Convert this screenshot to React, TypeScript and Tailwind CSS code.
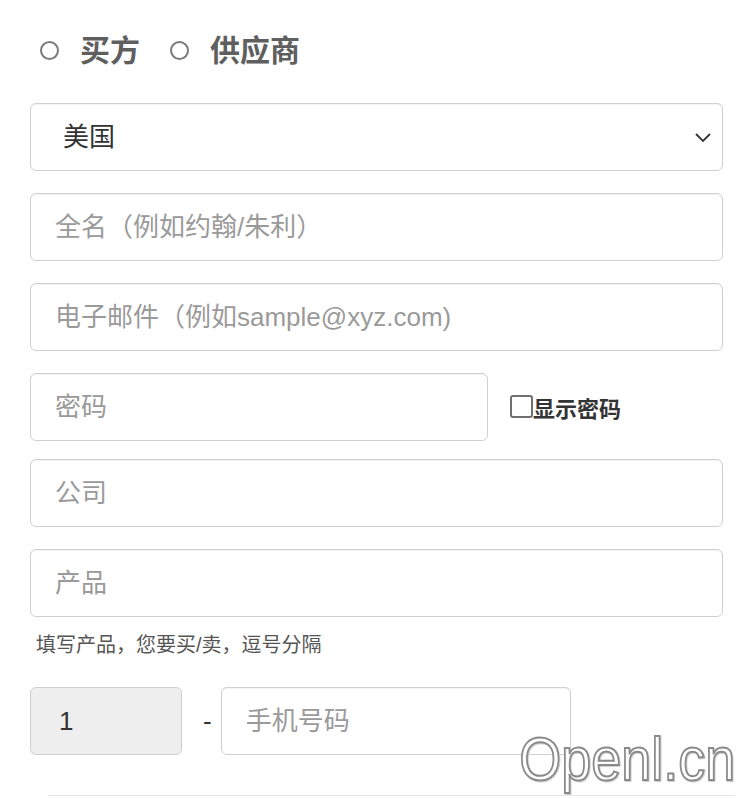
import React, { useState } from 'react';

const inputCls =
  'h-[68px] w-full rounded-[6px] border border-[#d0d0d0] bg-white px-6 text-[26px] text-[#333] placeholder:text-[#9a9a9a] outline-none shadow-[inset_0_1px_1px_rgba(0,0,0,0.05)]';

const App: React.FC = () => {
  const [role, setRole] = useState<'buyer' | 'supplier' | ''>('');
  const [showPwd, setShowPwd] = useState(false);

  return (
    <div className="min-h-[798px] w-[750px] overflow-hidden bg-white font-['Liberation_Sans','Noto_Sans_CJK_SC',sans-serif]">
      <div className="pl-[30px] pr-[27px] pt-[31px]">
        {/* role radios */}
        <div className="flex items-center h-[38px] pl-[10px] text-[30px] font-bold text-[#5f5f5f]">
          <label className="flex items-center cursor-pointer" onClick={() => setRole('buyer')}>
            <span className={`mr-[21px] h-[19px] w-[19px] rounded-full border-[2px] border-[#7a7a7a] ${role === 'buyer' ? 'bg-[#7a7a7a]' : ''}`} />
            买方
          </label>
          <label className="ml-[30px] flex items-center cursor-pointer" onClick={() => setRole('supplier')}>
            <span className={`mr-[21px] h-[19px] w-[19px] rounded-full border-[2px] border-[#7a7a7a] ${role === 'supplier' ? 'bg-[#7a7a7a]' : ''}`} />
            供应商
          </label>
        </div>

        <div className="mt-[34px] flex flex-col gap-[22px]">
          <div className="relative">
            <div className={`${inputCls} flex items-center pl-[32px]`}>美国</div>
            <svg className="absolute right-[11px] top-[28px]" width="18" height="12" viewBox="0 0 18 12">
              <path d="M2 3 L9 10 L16 3" fill="none" stroke="#333" strokeWidth="1.8" />
            </svg>
          </div>
          <input className={inputCls} placeholder="全名（例如约翰/朱利）" />
          <input className={inputCls} placeholder="电子邮件（例如sample@xyz.com)" />
          <div className="flex h-[68px] items-center">
            <input
              className={`${inputCls} !w-[458px]`}
              type={showPwd ? 'text' : 'password'}
              placeholder="密码"
            />
            <label className="ml-[22px] mt-[4px] flex items-center cursor-pointer text-[22px] font-bold text-[#333]" onClick={() => setShowPwd(!showPwd)}>
              <span className="mb-[6px] h-[23px] w-[23px] rounded-[3px] border-[2px] border-[#6f6f6f]" />
              显示密码
            </label>
          </div>
          <input className={`${inputCls} -mt-[4px]`} placeholder="公司" />
          <input className={inputCls} placeholder="产品" />
        </div>

        <div className="mt-[13px] pl-[6px] text-[20px] text-[#555]">填写产品，您要买/卖，逗号分隔</div>

        <div className="mt-[27px] flex items-center">
          <div className="h-[68px] w-[152px] flex items-center rounded-[6px] border border-[#d0d0d0] bg-[#eeeeee] pl-[28px] text-[26px] text-[#333]">
            1
          </div>
          <span className="ml-[21px] mr-[9px] text-[26px] text-[#333]">-</span>
          <input className={`${inputCls} !w-[350px]`} placeholder="手机号码" />
        </div>

        <div className="relative mt-[40px] ml-[18px] h-px w-[687px] bg-[#e5e5e5]">
          <span className="absolute right-0 bottom-[6px] origin-right scale-x-[0.87] text-[62px] font-['Liberation_Sans',sans-serif] leading-none text-white [-webkit-text-stroke:2px_#8a8a8a] drop-shadow-[1px_1px_0_#cfcfcf]">
            Openl.cn
          </span>
        </div>
      </div>
    </div>
  );
};

export default App;
